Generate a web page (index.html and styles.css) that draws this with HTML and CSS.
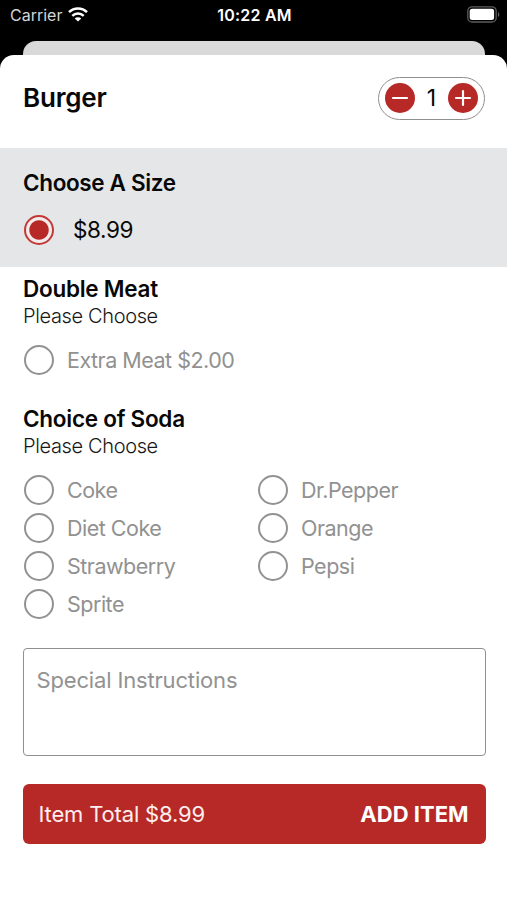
FILE: index.html
```html
<!DOCTYPE html>
<html lang="en">
<head>
<meta charset="utf-8">
<meta name="viewport" content="width=device-width">
<title>Burger</title>
<link rel="stylesheet" href="styles.css">
</head>
<body>
<header class="status">
  <div class="status-left">
    <span class="carrier">Carrier</span>
    <svg class="wifi" viewBox="0 0 20 15" width="20" height="15" fill="none" stroke="#fff" stroke-width="2.5">
      <path d="M1 5.2C6 .2 14 .2 19 5.2"/>
      <path d="M4.3 8.8c3.2-3.1 8.2-3.1 11.4 0"/>
      <path d="M10 14.6 6.7 11.5c1.8-1.7 4.8-1.7 6.6 0z" fill="#fff" stroke="none"/>
    </svg>
  </div>
  <time class="clock">10:22 AM</time>
  <svg class="battery" viewBox="0 0 34 17" width="34" height="17">
    <rect x=".8" y=".8" width="28.4" height="15.2" rx="4.3" fill="none" stroke="#5c5c5c" stroke-width="1.3"/>
    <rect x="2.7" y="2.8" width="24.4" height="11.2" rx="2.5" fill="#fff"/>
    <path d="M31 6.2c1.7.7 1.7 4 0 4.7z" fill="#666"/>
  </svg>
</header>
<div class="back-card"></div>
<main class="sheet">
  <div class="title-row">
    <h1 class="title">Burger</h1>
    <div class="stepper">
      <button class="step" aria-label="Decrease"><svg viewBox="0 0 30 30"><path d="M8 15h14"/></svg></button>
      <span class="count">1</span>
      <button class="step" aria-label="Increase"><svg viewBox="0 0 30 30"><path d="M8 15h14M15 8v14"/></svg></button>
    </div>
  </div>
  <section class="size">
    <h2 class="heading h-size">Choose A Size</h2>
    <div class="option chosen"><span class="radio on"></span><span class="price">$8.99</span></div>
  </section>
  <section class="group meat">
    <h2 class="heading">Double Meat</h2>
    <p class="hint">Please Choose</p>
    <div class="options">
      <div class="option"><span class="radio"></span><span class="label">Extra Meat $2.00</span></div>
    </div>
  </section>
  <section class="group soda">
    <h2 class="heading">Choice of Soda</h2>
    <p class="hint">Please Choose</p>
    <div class="options">
      <div class="option"><span class="radio"></span><span class="label">Coke</span></div>
      <div class="option"><span class="radio"></span><span class="label">Dr.Pepper</span></div>
      <div class="option"><span class="radio"></span><span class="label">Diet Coke</span></div>
      <div class="option"><span class="radio"></span><span class="label">Orange</span></div>
      <div class="option"><span class="radio"></span><span class="label">Strawberry</span></div>
      <div class="option"><span class="radio"></span><span class="label">Pepsi</span></div>
      <div class="option"><span class="radio"></span><span class="label">Sprite</span></div>
    </div>
  </section>
  <div class="notes"><span class="notes-text">Special Instructions</span></div>
  <div class="add-bar"><span class="total">Item Total $8.99</span><span class="add">ADD ITEM</span></div>
</main>
</body>
</html>
```
FILE: styles.css
```css
* { box-sizing: border-box; margin: 0; padding: 0; }
body {
  width: 507px;
  height: 900px;
  overflow: hidden;
  background: #000;
  color: #080808;
  font-family: Inter, "Liberation Sans", sans-serif;
  display: flex;
  flex-direction: column;
}
.status {
  height: 41px;
  padding: 0 6px 11px 10px;
  display: grid;
  grid-template-columns: 1fr auto 1fr;
  align-items: center;
  color: #fff;
}
.status-left { display: flex; align-items: center; gap: 6px; }
.carrier { font-size: 16px; color: #d4d4d4; }
.wifi { margin-top: -2px; }
.clock { font-size: 16px; font-weight: 600; letter-spacing: .2px; margin-right: 2px; }
.battery { justify-self: end; margin-top: -2px; }
.back-card {
  flex: none;
  height: 14px;
  margin: 0 22px 0 23px;
  background: #d9d9d9;
  border-radius: 13px 13px 0 0;
}
.sheet {
  flex: 1;
  background: #fff;
  border-radius: 14px 14px 0 0;
}
.title-row {
  height: 93px;
  padding: 0 22px 7px 23px;
  display: flex;
  align-items: center;
  justify-content: space-between;
}
.title { font-size: 26px; font-weight: 600; line-height: 32px; letter-spacing: -.2px; }
.stepper {
  width: 107px;
  height: 43px;
  padding: 0 6px;
  display: flex;
  align-items: center;
  justify-content: space-between;
  border: 1px solid #8f8f8f;
  border-radius: 22px;
}
.step {
  width: 30px;
  height: 30px;
  border: 0;
  border-radius: 50%;
  background: #b72926;
}
.step svg {
  display: block;
  width: 30px;
  height: 30px;
  stroke: #fff;
  stroke-width: 2.2;
  stroke-linecap: round;
}
.count { font-size: 23px; line-height: 28px; }
.size { height: 119px; padding: 21px 23px 0; background: #e4e6e7; }
.heading { font-size: 22.5px; font-weight: 600; line-height: 28px; letter-spacing: -.26px; white-space: nowrap; }
.h-size { letter-spacing: -.36px; }
.option { display: flex; align-items: center; height: 37.75px; padding-left: 1px; }
.chosen { margin-top: 14px; }
.radio {
  flex: none;
  width: 30px;
  height: 30px;
  border: 2px solid #929292;
  border-radius: 50%;
}
.radio.on {
  border-color: #c23a37;
  background: radial-gradient(circle, #b72926 9.2px, #f3eaea 10.2px);
}
.price { margin-left: 19px; font-size: 22.5px; letter-spacing: -.4px; }
.label { margin-left: 13px; font-size: 21.5px; letter-spacing: -.5px; color: #919191; white-space: nowrap; }
.group { padding: 7px 23px 0; height: 130px; }
.meat { padding-top: 7.5px; }
.soda { padding-top: 7.5px; height: 251px; }
.hint { font-size: 20px; font-weight: 300; line-height: 26px; letter-spacing: -.36px; color: #181818; }
.options { margin-top: 13px; display: grid; grid-template-columns: 234px 1fr; }
.notes {
  width: 463px;
  height: 108px;
  margin-left: 22.5px;
  padding: 17px 13px;
  border: 1px solid #909090;
  border-radius: 4px;
}
.notes-text { display: block; font-size: 22px; line-height: 28px; letter-spacing: -.16px; color: #929292; }
.add-bar {
  width: 463px;
  height: 60px;
  margin: 28px 0 0 22.5px;
  padding: 0 17px 0 16px;
  display: flex;
  align-items: center;
  justify-content: space-between;
  background: #b72926;
  border-radius: 6px;
  color: #fff;
  font-size: 22px;
}
.total { color: #fdeeee; letter-spacing: -.16px; }
.add { font-weight: 700; }
```
